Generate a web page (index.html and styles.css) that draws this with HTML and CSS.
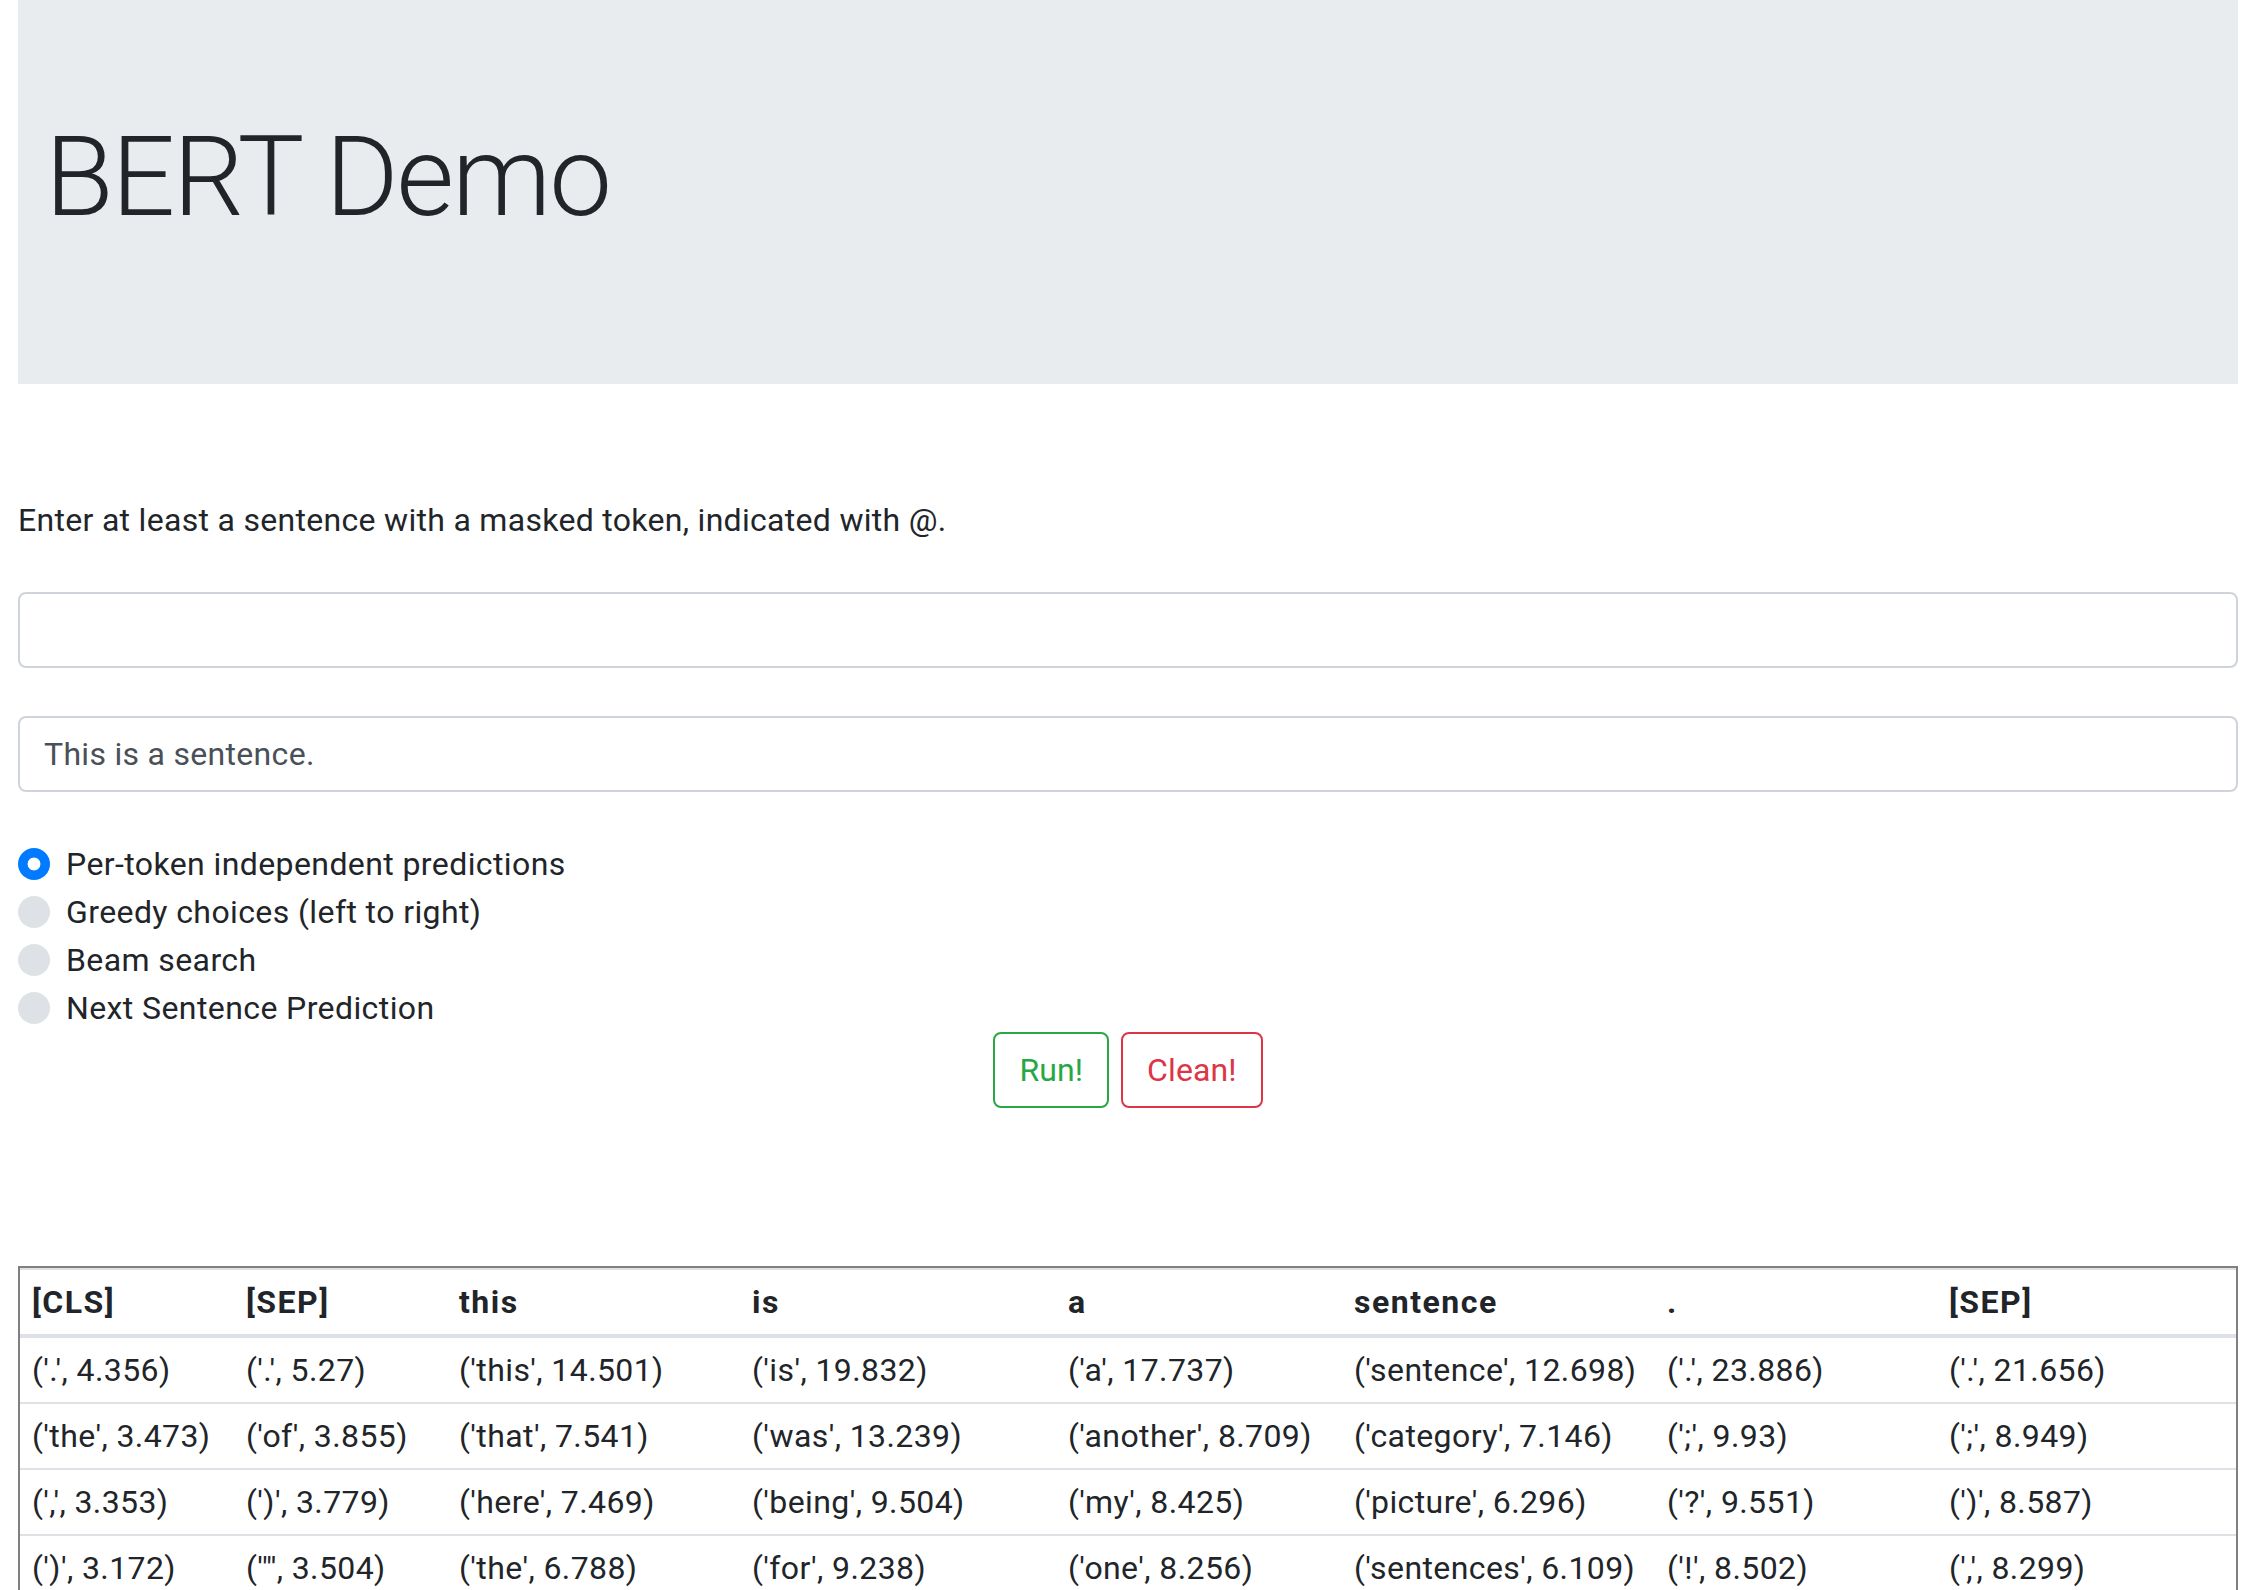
FILE: index.html
```html
<!DOCTYPE html>
<html lang="en">
<head>
<meta charset="utf-8">
<title>BERT Demo</title>
<link rel="stylesheet" href="styles.css">
</head>
<body>
<div class="page">
  <div class="jumbotron">
    <h1 class="title">BERT Demo</h1>
  </div>

  <p class="intro">Enter at least a sentence with a masked token, indicated with @.</p>

  <input class="field" type="text" value="">
  <input class="field" type="text" value="This is a sentence.">

  <div class="options">
    <label class="option"><input class="radio radio-on" type="radio" name="mode" checked><span>Per-token independent predictions</span></label>
    <label class="option"><input class="radio" type="radio" name="mode"><span>Greedy choices (left to right)</span></label>
    <label class="option"><input class="radio" type="radio" name="mode"><span>Beam search</span></label>
    <label class="option"><input class="radio" type="radio" name="mode"><span>Next Sentence Prediction</span></label>
  </div>

  <div class="actions">
    <button class="btn btn-run" type="button">Run!</button>
    <button class="btn btn-clean" type="button">Clean!</button>
  </div>

  <table class="results">
    <colgroup>
      <col class="c1"><col class="c2"><col class="c3"><col class="c4">
      <col class="c5"><col class="c6"><col class="c7"><col class="c8">
    </colgroup>
    <thead>
      <tr><th>[CLS]</th><th>[SEP]</th><th>this</th><th>is</th><th>a</th><th>sentence</th><th>.</th><th>[SEP]</th></tr>
    </thead>
    <tbody>
      <tr><td>('.', 4.356)</td><td>('.', 5.27)</td><td>('this', 14.501)</td><td>('is', 19.832)</td><td>('a', 17.737)</td><td>('sentence', 12.698)</td><td>('.', 23.886)</td><td>('.', 21.656)</td></tr>
      <tr><td>('the', 3.473)</td><td>('of', 3.855)</td><td>('that', 7.541)</td><td>('was', 13.239)</td><td>('another', 8.709)</td><td>('category', 7.146)</td><td>(';', 9.93)</td><td>(';', 8.949)</td></tr>
      <tr><td>(',', 3.353)</td><td>(')', 3.779)</td><td>('here', 7.469)</td><td>('being', 9.504)</td><td>('my', 8.425)</td><td>('picture', 6.296)</td><td>('?', 9.551)</td><td>(')', 8.587)</td></tr>
      <tr><td>(')', 3.172)</td><td>('"', 3.504)</td><td>('the', 6.788)</td><td>('for', 9.238)</td><td>('one', 8.256)</td><td>('sentences', 6.109)</td><td>('!', 8.502)</td><td>(',', 8.299)</td></tr>
    </tbody>
  </table>
</div>
</body>
</html>
```

FILE: styles.css
```css
* { box-sizing: border-box; }

body {
  margin: 0;
  font-family: Roboto, "Liberation Sans", Arial, sans-serif;
  font-size: 32px;
  line-height: 48px;
  letter-spacing: 0.4px;
  color: #212529;
  background: #fff;
}

.page {
  padding: 0 16px 0 18px;
}

.jumbotron {
  background: #e9ecef;
  height: 384px;
  padding: 110px 27px 0;
}

.title {
  margin: 0;
  font-size: 112px;
  font-weight: 300;
  line-height: 1.2;
  letter-spacing: -2.2px;
}

.intro {
  margin: 112px 0 48px;
  letter-spacing: 0.3px;
}

.field {
  display: block;
  width: 100%;
  height: 76px;
  margin: 0 0 48px;
  padding: 12px 24px;
  border: 2px solid #ced4da;
  border-radius: 8px;
  font: inherit;
  line-height: 48px;
  letter-spacing: 0.3px;
  color: #495057;
  background: #fff;
  outline: none;
}

.options {
  display: flex;
  flex-direction: column;
}

.option {
  display: flex;
  align-items: flex-start;
  min-height: 48px;
}

.radio {
  appearance: none;
  -webkit-appearance: none;
  flex: none;
  width: 32px;
  height: 32px;
  margin: 8px 16px 8px 0;
  border-radius: 50%;
  background: #dee2e6;
  border: none;
}

.radio-on {
  background: radial-gradient(circle, #fff 0 6px, #007bff 6.8px);
}

.actions {
  display: flex;
  justify-content: center;
  gap: 12px;
}

.btn {
  height: 76px;
  padding: 12px 24px;
  border: 2px solid;
  border-radius: 8px;
  background: transparent;
  font: inherit;
  line-height: 48px;
  letter-spacing: 0.1px;
}

.btn-run { color: #28a745; border-color: #28a745; }
.btn-clean { color: #dc3545; border-color: #dc3545; }

.results {
  width: 100%;
  margin-top: 158px;
  border: 2px solid #808080;
  border-collapse: separate;
  border-spacing: 0;
  table-layout: fixed;
}

.c1 { width: 214px; }
.c2 { width: 213px; }
.c3 { width: 293px; }
.c4 { width: 316px; }
.c5 { width: 286px; }
.c6 { width: 313px; }
.c7 { width: 282px; }
.c8 { width: 299px; }

.results th,
.results td {
  padding: 8px 12px;
  text-align: left;
  vertical-align: top;
  white-space: nowrap;
  border-top: 2px solid #dee2e6;
}

.results thead th {
  font-weight: 700;
  letter-spacing: 1.5px;
  border-bottom: 4px solid #dee2e6;
}

.results tbody tr:first-child td {
  border-top: 0;
}
```
